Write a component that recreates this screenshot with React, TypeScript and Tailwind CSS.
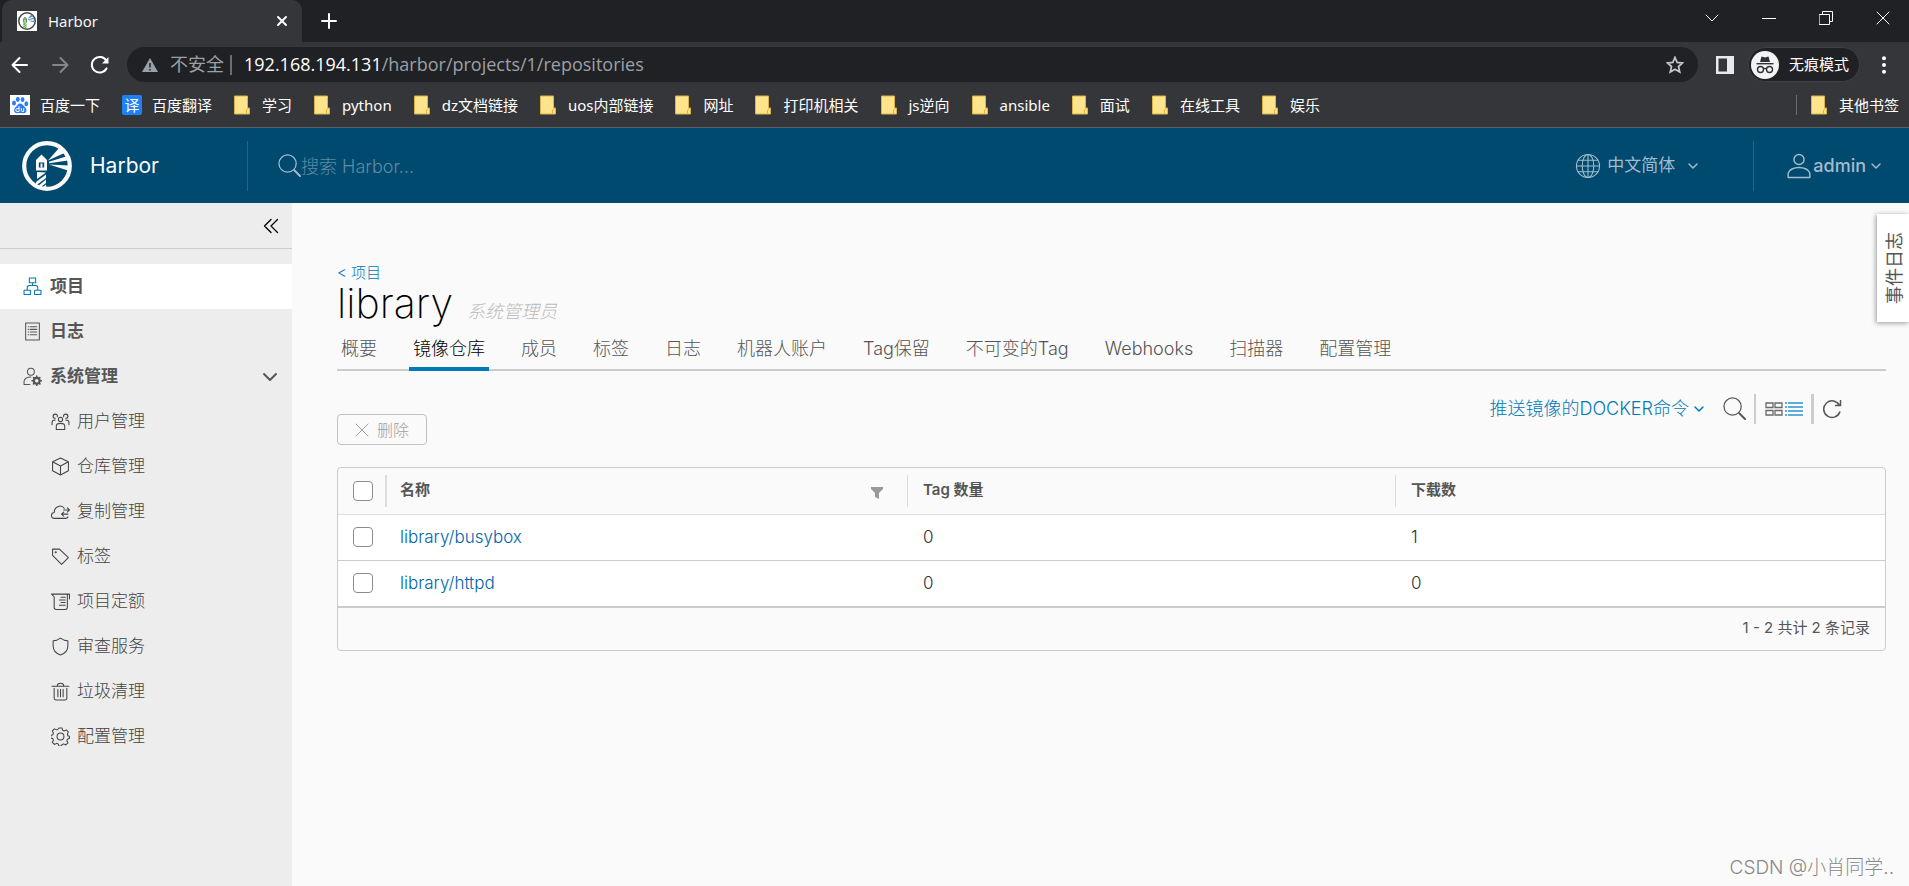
import type { ReactNode } from 'react'

function Icon({ className, box = 36, width = 2, children }: { className: string; box?: number; width?: number; children: ReactNode }) {
  return (
    <svg
      className={`shrink-0 ${className}`}
      viewBox={`0 0 ${box} ${box}`}
      fill="none"
      stroke="currentColor"
      strokeWidth={width}
      strokeLinecap="round"
      strokeLinejoin="round"
      aria-hidden="true"
    >
      {children}
    </svg>
  )
}

const ChevronDown = ({ className }: { className: string }) => (
  <Icon className={className} box={12} width={1.5}>
    <path d="M2 4l4 4 4-4" />
  </Icon>
)

const SearchIcon = ({ className }: { className: string }) => (
  <Icon className={className} box={24} width={1.3}>
    <circle cx="10" cy="10" r="9" />
    <path d="M17 17l6 6" strokeWidth="2" />
  </Icon>
)

const HarborMark = ({ className, beam = 'currentColor', tower = 'currentColor' }: { className: string; beam?: string; tower?: string }) => (
  <svg className={`shrink-0 ${className}`} viewBox="0 0 50 50" aria-hidden="true">
    <circle cx="25" cy="25" r="22.8" fill="none" stroke="currentColor" strokeWidth="4.2" />
    <g fill={beam}>
      <path d="M26 19.500L37 7L42.500 12Z" />
      <path d="M27 20.800L44 15.500L46 19.500L27 22.300Z" />
      <path d="M27 23.500L47 24.500L46 29.500Z" />
    </g>
    <g fill={tower}>
      <path d="M19.500 13.500L25 19H14z" />
      <path d="M14 19h11v10.500h-11zM16.800 21.500v5h5.400v-5z" fillRule="evenodd" />
      <path d="M18.500 22.500h2v4h-2z" />
      <path d="M15 31l9 0.500-9 6.500z" />
      <path d="M24 33.500v3.500l-10 7.500v-3.500z" />
      <path d="M24 38.500v3.500l-7 5.500-3-0.800z" />
      <path d="M24 43.500l1 5.500-6-1.200z" />
    </g>
  </svg>
)

const FolderIcon = () => (
  <svg className="h-5 w-4 shrink-0" viewBox="0 0 16 20" aria-hidden="true">
    <path d="M.5 1h13v12h2v6H.5z" fill="#ffe48c" stroke="#d8b548" />
    <path d="M12.500 18.500v-3.500l2-1.500" fill="none" stroke="#e3b52d" />
  </svg>
)

const BaiduIcon = () => (
  <svg className="size-5 shrink-0" viewBox="0 0 20 20" aria-hidden="true">
    <path fill="#fff" d="M0 0h20v20H0z" />
    <g fill="#2f7cf6">
      <ellipse cx="4" cy="8" rx="2" ry="2.600" />
      <ellipse cx="7.800" cy="4.300" rx="1.900" ry="2.600" />
      <ellipse cx="12.600" cy="4.500" rx="1.900" ry="2.600" />
      <ellipse cx="16.300" cy="8.800" rx="1.900" ry="2.500" />
      <path d="M10 8.500c-2 0-2.600 2-4.500 3.700-2 1.800-2 6 1.500 6 1.500 0 4.500-.2 6 0 3.500.4 4.500-3.500 2.300-5.800-2-2-3-3.900-5.300-3.900z" />
    </g>
    <path d="M9 11v5.500H7.300a1.400 1.400 0 010-3H9M11.300 13.200v2c0 1 .5 1.300 1.200 1.300h1.200v-3.300" fill="none" stroke="#fff" strokeWidth="1" />
  </svg>
)

const navTop = 'flex h-[45px] w-full items-center gap-2 pl-[23px] pr-3.5 text-left text-[17px] font-bold text-[#565656]'

const subItems: { label: string; icon: ReactNode }[] = [
  {
    label: '用户管理',
    icon: (
      <>
        <circle cx="18" cy="14" r="4" />
        <path d="M10 33v-6c0-4 4-5.500 8-5.500s8 1.500 8 5.500v6z" />
        <path d="M12 9c1-4-2-5-4-5s-4 2-4 4 2 4 4 4M24 9c-1-4 2-5 4-5s4 2 4 4-2 4-4 4M8 15c-4 0-6 2-6 5v4M28 15c4 0 6 2 6 5v4" />
      </>
    ),
  },
  { label: '仓库管理', icon: <path d="M18 2l15 7v17l-15 8-15-8V9zM3 9l15 8 15-8M18 17v17" /> },
  {
    label: '复制管理',
    icon: <path d="M27 31H7C-1 31-1 21 6 20 6 8 20 4 25 12M27 31c3 0 5-1 5-3M24 15h11M31 11l4 4-4 4M32 23H20M24 19l-4 4 4 4" />,
  },
  {
    label: '标签',
    icon: (
      <>
        <path d="M3 4v12l17 17 13-13L16 4z" />
        <circle cx="9" cy="10" r="1" />
      </>
    ),
  },
  { label: '项目定额', icon: <path d="M1 4h34v9M1 4l5 5v20c0 3 1 4 4 4h17c3 0 4-1 4-4V4M19 10h8M16 15h11M19 20h8M16 25h11" /> },
  { label: '审查服务', icon: <path d="M18 2c4 3 9 5 14 5v9c0 9-5 15-14 18C9 31 4 25 4 16V7c5 0 10-2 14-5z" /> },
  { label: '垃圾清理', icon: <path d="M2 8h32M12 7c0-6 12-6 12 0M6 12v19c0 2 1 3 3 3h18c2 0 3-1 3-3V12M13 14v14M18 14v14M23 14v14" /> },
  {
    label: '配置管理',
    icon: (
      <>
        <circle cx="18" cy="18" r="6.500" />
        <path d="M15 2h6l1 4 3 1.500 4-2 4 4-2 4 1 3 3 1v4l-4 1.500-1 3 2 4-4 4-4-2-3 1-1 3h-5l-1.500-4-3-1-4 2-4-4 2-4-1-3-4-1v-5l4-1.500 1-3-2-4 4-4 4 2 3-1.500z" />
      </>
    ),
  },
]

const bookmarks = ['学习', 'python', 'dz文档链接', 'uos内部链接', '网址', '打印机相关', 'js逆向', 'ansible', '面试', '在线工具', '娱乐']
const tabs = ['概要', '镜像仓库', '成员', '标签', '日志', '机器人账户', 'Tag保留', '不可变的Tag', 'Webhooks', '扫描器', '配置管理']
const activeTab = '镜像仓库'
const repositories = [
  { name: 'library/busybox', tags: 0, pulls: 1 },
  { name: 'library/httpd', tags: 0, pulls: 0 },
]

function BrowserChrome() {
  return (
    <div className="bg-[#35363a] font-['Open_Sans','Noto_Sans_CJK_SC',sans-serif] text-white">
      <div className="flex h-[42px] items-stretch bg-[#202124] pl-0.5">
        <div className="flex w-[300px] items-center gap-[11px] rounded-t-[10px] bg-[#35363a] pl-[15px] pr-3.5">
          <span className="flex size-5 items-center justify-center bg-white text-[#444]">
            <HarborMark className="size-[18px]" beam="#5b93c9" tower="#5a9b3c" />
          </span>
          <span className="flex-1 text-[15px]">Harbor</span>
          <button type="button" aria-label="关闭标签页">
            <Icon className="size-3" box={12} width={2}>
              <path d="M2 2l8 8M10 2l-8 8" />
            </Icon>
          </button>
        </div>
        <button type="button" aria-label="新标签页" className="ml-[19px]">
          <Icon className="size-4" box={16} width={2}>
            <path d="M8 1v14M1 8h14" />
          </Icon>
        </button>
        <div className="ml-auto flex items-center gap-[43px] pb-1.5 pr-[19px]">
          <button type="button" aria-label="搜索标签页">
            <Icon className="size-3.5" box={14} width={1}>
              <path d="M1 4l6 6 6-6" />
            </Icon>
          </button>
          <button type="button" aria-label="最小化">
            <Icon className="size-3.5" box={14} width={1}>
              <path d="M0 7.500h14" />
            </Icon>
          </button>
          <button type="button" aria-label="还原">
            <Icon className="size-3.5" box={14} width={1}>
              <path d="M.5 3.500h10v10H.5zM3.500 3V.5h10v10H11" />
            </Icon>
          </button>
          <button type="button" aria-label="关闭">
            <Icon className="size-3.5" box={14} width={1}>
              <path d="M1 1l12 12M13 1L1 13" />
            </Icon>
          </button>
        </div>
      </div>

      <div className="flex h-[45px] items-center pl-2.5 pr-4 pt-[5px] pb-[5px]">
        <button type="button" aria-label="后退">
          <Icon className="size-5" box={20} width={2}>
            <path d="M17 10H2.500M9.500 3l-7 7 7 7" />
          </Icon>
        </button>
        <button type="button" aria-label="前进" className="ml-5 text-[#85868a]">
          <Icon className="size-5" box={20} width={2}>
            <path d="M3 10h14.500M10.500 3l7 7-7 7" />
          </Icon>
        </button>
        <button type="button" aria-label="刷新" className="ml-5">
          <Icon className="size-5" box={20} width={2}>
            <path d="M16.500 13.500A7.800 7.800 0 1116.500 6" />
            <path d="M18.500 2v6.500H12z" fill="currentColor" stroke="none" />
          </Icon>
        </button>
        <div className="ml-[17px] flex h-[35px] flex-1 items-center rounded-full bg-[#202124] pl-[15px] pr-3.5">
          <svg className="size-4 shrink-0" viewBox="0 0 16 16" aria-hidden="true">
            <path d="M8 1l8 14H0z" fill="#9aa0a6" />
            <path d="M8 6v4.500M8 12v1.500" stroke="#202124" strokeWidth="1.500" />
          </svg>
          <span className="ml-3 text-[18px] text-[#9aa0a6]">不安全</span>
          <span className="ml-1.5 h-5 w-0.5 bg-[#6b6d70]" />
          <div className="relative ml-3 flex-1 text-[18px] text-[#9aa0a6]">
            <span className="text-white">192.168.194.131</span>/harbor/projects/1/repositories
            <input aria-label="地址" className="absolute inset-0 w-full bg-transparent outline-none" />
          </div>
          <button type="button" aria-label="为此页添加书签" className="text-[#c4c7ca]">
            <Icon className="size-[18px]" box={18} width={1.8}>
              <path d="M9 1.500l2.200 5 5.300.5-4 3.600 1.200 5.400L9 13.200 4.300 16l1.200-5.400-4-3.600 5.300-.5z" strokeLinejoin="miter" />
            </Icon>
          </button>
        </div>
        <button type="button" aria-label="侧边栏" className="ml-[18px]">
          <svg className="size-[18px]" viewBox="0 0 18 18" aria-hidden="true">
            <path d="M0 0h18v18H0zM2.500 2.500v13H11v-13z" fill="#e8eaed" fillRule="evenodd" />
          </svg>
        </button>
        <button
          type="button"
          className="ml-3.5 flex h-[35px] items-center gap-2.5 rounded-full border border-[#3f4044] bg-[#202124] pl-0.5 pr-2.5 text-[15px]"
        >
          <svg className="size-7" viewBox="0 0 28 28" aria-hidden="true">
            <circle cx="14" cy="14" r="14" fill="#f1f3f4" />
            <path d="M10.500 5.500l3.500 1 3.500-1 1.500 5.500H9z" fill="#303134" />
            <path d="M5.500 12.700h17" stroke="#303134" strokeWidth="1.400" />
            <g fill="none" stroke="#303134" strokeWidth="1.400">
              <circle cx="9.500" cy="18.500" r="3" />
              <circle cx="18.500" cy="18.500" r="3" />
              <path d="M12.500 18c1-.8 2-.8 3 0" />
            </g>
          </svg>
          无痕模式
        </button>
        <button type="button" aria-label="菜单" className="ml-[15px]">
          <svg className="size-[18px]" viewBox="0 0 18 18" fill="currentColor" aria-hidden="true">
            <circle cx="9" cy="2.200" r="2" />
            <circle cx="9" cy="9" r="2" />
            <circle cx="9" cy="15.800" r="2" />
          </svg>
        </button>
      </div>

      <nav
        aria-label="书签栏"
        className="flex h-[41px] items-center gap-[22px] border-b border-[#5f6063] pb-1 pl-2.5 pr-2.5 font-['Noto_Sans','Noto_Sans_CJK_SC',sans-serif] text-[15px]"
      >
        <a href="#" className="flex items-center gap-2.5">
          <BaiduIcon />
          百度一下
        </a>
        <a href="#" className="flex items-center gap-2.5">
          <span className="flex size-5 items-center justify-center rounded-xs bg-[#1c82f5] text-[15px] leading-5">译</span>
          百度翻译
        </a>
        {bookmarks.map((label) => (
          <a key={label} href="#" className="flex items-center gap-3">
            <FolderIcon />
            {label}
          </a>
        ))}
        <a href="#" className="ml-auto flex items-center gap-3">
          <span className="mr-0.5 h-5 w-px bg-[#6b6d70]" />
          <FolderIcon />
          其他书签
        </a>
      </nav>
    </div>
  )
}

function Header() {
  return (
    <header className="flex h-[75px] items-center bg-[#004a70] text-[#a3bccb]">
      <a href="#" className="flex w-[247px] items-center gap-[18px] pl-[22px] text-[21px] text-[#fafafa]">
        <HarborMark className="size-[50px]" />
        Harbor
      </a>
      <div className="flex h-[50px] flex-1 items-center border-l border-[#25658a] pl-[30px]">
        <SearchIcon className="size-[23px]" />
        <input
          type="search"
          aria-label="搜索 Harbor"
          placeholder="搜索 Harbor..."
          className="w-60 bg-transparent pt-0.5 text-[18px] font-light outline-none placeholder:text-[#5f8aa3]"
        />
      </div>
      <button type="button" className="flex h-[50px] items-center pr-[54px] text-[17px]">
        <Icon className="mr-1.5 size-[26px]" width={1.5}>
          <circle cx="18" cy="18" r="16" />
          <ellipse cx="18" cy="18" rx="8" ry="16" />
          <path d="M18 2v32M2 18h32M5 10h26M5 26h26" />
        </Icon>
        中文简体
        <ChevronDown className="ml-3 size-3" />
      </button>
      <button type="button" className="flex h-[50px] items-center border-l border-[#25658a] pl-8 pr-[27px] text-[18px] font-medium">
        <Icon className="mr-px size-[26px]" width={2}>
          <circle cx="18" cy="9" r="7" />
          <path d="M3 34v-6c1-5 8-8 15-8s14 3 15 8v6z" />
        </Icon>
        admin
        <ChevronDown className="ml-1 size-3" />
      </button>
    </header>
  )
}

function Sidebar() {
  return (
    <aside className="w-[292px] shrink-0 bg-[#ededed]">
      <div className="mb-[15px] flex h-[46px] items-center justify-end border-b border-[#ccc] pr-[13px]">
        <button type="button" aria-label="收起侧栏" className="text-black">
          <Icon className="size-4" box={16} width={1.3}>
            <path d="M8 1.500L1.500 8 8 14.500M14.500 1.500L8 8l6.500 6.500" />
          </Icon>
        </button>
      </div>
      <nav aria-label="主导航">
        <a href="#" className={`${navTop} bg-white`}>
          <Icon className="size-[19px] text-[#0079b8]">
            <path d="M12 2h12v9H12zM2 25h12v8H2zM22 25h12v8H22zM18 11v5M8 25v-5c0-3 1-4 4-4h12c3 0 4 1 4 4v5" />
          </Icon>
          项目
        </a>
        <a href="#" className={navTop}>
          <Icon className="size-[19px]">
            <path d="M5 2h26v32H5zM10 9h1M10 14h1M10 19h1M10 24h1M14 9h12M14 14h12M14 19h12M14 24h12" />
          </Icon>
          日志
        </a>
        <button type="button" className={navTop} aria-expanded="true">
          <Icon className="size-[19px]">
            <circle cx="15" cy="9" r="6.500" />
            <path d="M13 33H2v-6c1-5 6-8 13-8" />
            <circle cx="26" cy="26" r="5.500" strokeWidth="4" />
            <path d="M26 17v3M26 32v3M17 26h3M32 26h3M20 20l2 2M30 30l2 2M20 32l2-2M30 22l2-2" strokeWidth="3" />
          </Icon>
          <span className="flex-1">系统管理</span>
          <Icon className="size-4" box={16} width={2}>
            <path d="M2 5l6 6 6-6" />
          </Icon>
        </button>
        {subItems.map(({ label, icon }) => (
          <a key={label} href="#" className="flex h-[45px] items-center gap-[7px] pl-[51px] text-[17px] font-light text-[#444]">
            <Icon className="size-[19px]">{icon}</Icon>
            {label}
          </a>
        ))}
      </nav>
    </aside>
  )
}

const check = 'block size-5 appearance-none rounded-[4px] border border-[#8c8c8c] bg-white'

function Repositories() {
  return (
    <div className="mt-[43px] overflow-hidden rounded-[4px] border border-[#ccc]">
      <table className="w-full table-fixed text-left text-[#565656]">
        <colgroup>
          <col className="w-[47px]" />
          <col className="w-[522px]" />
          <col className="w-[488px]" />
          <col />
        </colgroup>
        <thead>
          <tr className="h-[46px] border-b border-[#ddd] text-[15px]">
            <th className="pl-[15px]">
              <input type="checkbox" aria-label="全选" className={check} />
            </th>
            <th className="font-semibold">
              <div className="flex h-8 items-center border-l-2 border-[#ddd] pb-0.5 pl-[13px]">
                名称
                <button type="button" aria-label="筛选名称" className="ml-auto mr-6 pt-1.5 text-[#9a9a9a]">
                  <svg className="size-3" viewBox="0 0 12 12" fill="currentColor" aria-hidden="true">
                    <path d="M0 0h12v2L8 6v6l-4-2V6L0 2z" />
                  </svg>
                </button>
              </div>
            </th>
            <th className="font-semibold">
              <div className="flex h-8 items-center border-l border-[#ddd] pb-0.5 pl-[15px]">Tag 数量</div>
            </th>
            <th className="font-semibold">
              <div className="flex h-8 items-center border-l border-[#ddd] pb-0.5 pl-[15px]">下载数</div>
            </th>
          </tr>
        </thead>
        <tbody>
          {repositories.map((repo) => (
            <tr key={repo.name} className="h-[46px] border-b border-[#ccc] bg-white text-[17px] font-light">
              <td className="pl-[15px]">
                <input type="checkbox" aria-label={repo.name} className={check} />
              </td>
              <td className="pl-[15px] pt-0.5">
                <a href="#" className="text-[#0065ab]">
                  {repo.name}
                </a>
              </td>
              <td className="pl-4 pt-0.5 text-[#333]">{repo.tags}</td>
              <td className="pl-4 pt-0.5 text-[#333]">{repo.pulls}</td>
            </tr>
          ))}
        </tbody>
      </table>
      <div className="flex h-[43px] items-center justify-end border-t border-[#ccc] pr-[15px] text-[15px] text-[#565656]">1 - 2 共计 2 条记录</div>
    </div>
  )
}

function Project() {
  return (
    <main className="relative flex-1 bg-[#fafafa] pl-[45px] pr-[23px] pt-[60px]">
      <a href="#" className="block w-fit text-[15px] font-light leading-5 text-[#0079b8]">
        &lt; 项目
      </a>
      <div className="flex items-baseline gap-3.5 leading-10">
        <h1 className="text-[41px] font-extralight text-black">library</h1>
        <em className="text-[18px] font-light text-[#bbb]">系统管理员</em>
      </div>
      <div role="tablist" className="flex h-[39px] gap-7 border-b-2 border-[#ccc] text-[18px] font-light text-[#555]">
        {tabs.map((label) => (
          <button
            key={label}
            type="button"
            role="tab"
            aria-selected={label === activeTab}
            className={label === activeTab ? '-mb-0.5 border-b-4 border-[#0079b8] px-1 pb-0.5 text-black' : 'px-1 pb-1'}
          >
            {label}
          </button>
        ))}
      </div>
      <div className="mt-[22px] flex items-start justify-between">
        <button
          type="button"
          disabled
          className="mt-[21px] -mb-[33px] flex h-[31px] w-[90px] items-center justify-center gap-2 rounded-[4px] border border-[#c1c1c1] text-base font-light text-[#a0a0a0]"
        >
          <Icon className="size-3.5" box={14} width={1}>
            <path d="M1 1l12 12M13 1L1 13" />
          </Icon>
          删除
        </button>
        <div className="mr-11 flex h-[31px] items-center">
          <button type="button" className="flex items-center gap-1 text-[18px] font-light text-[#0079b8]">
            推送镜像的DOCKER命令
            <ChevronDown className="size-3" />
          </button>
          <button type="button" aria-label="搜索" className="ml-[18px] text-[#565656]">
            <SearchIcon className="size-[23px]" />
          </button>
          <span className="ml-2 h-[30px] w-0.5 bg-[#ccc]" />
          <button type="button" aria-label="卡片视图" className="ml-[9px] text-[#6a6a6a]">
            <svg className="h-[14px] w-[18px]" viewBox="0 0 18 14" fill="none" stroke="currentColor" strokeWidth="1.300" aria-hidden="true">
              <path d="M1 1h7v4.500H1zM10 1h7v4.500h-7zM1 8.500h7V13H1zM10 8.500h7V13h-7z" />
            </svg>
          </button>
          <button type="button" aria-label="列表视图" className="ml-0.5 text-[#2b94cb]">
            <svg className="h-[14px] w-[18px]" viewBox="0 0 18 14" fill="none" stroke="currentColor" strokeWidth="1.500" aria-hidden="true">
              <path d="M0 1h2M3 1h15M0 5h2M3 5h15M0 9h2M3 9h15M0 13h2M3 13h15" />
            </svg>
          </button>
          <span className="ml-2 h-[30px] w-[3px] bg-[#ccc]" />
          <button type="button" aria-label="刷新" className="ml-2 text-[#565656]">
            <Icon className="size-5" box={20} width={1.5}>
              <path d="M18 12.500A8.300 8.300 0 1117.500 6.500M18.500 1v5.500H13" strokeLinecap="butt" strokeLinejoin="miter" />
            </Icon>
          </button>
        </div>
      </div>
      <Repositories />
      <button
        type="button"
        className="absolute right-0 top-[11px] flex h-[108px] w-8 items-center justify-center bg-white pl-1 text-[18px] leading-6 text-[#565656] shadow-[-1px_1px_5px_rgba(0,0,0,0.4)]"
      >
        <span className="rotate-180 [text-orientation:sideways] [writing-mode:vertical-rl]">事件日志</span>
      </button>
      <span className="absolute bottom-1 right-[15px] text-[19px] font-light text-[#888] [text-shadow:1px_1px_1px_#fff]">CSDN @小肖同学..</span>
    </main>
  )
}

export default function App() {
  return (
    <div className="flex min-h-screen flex-col font-['Inter','Noto_Sans_CJK_SC',sans-serif]">
      <BrowserChrome />
      <Header />
      <div className="flex flex-1 overflow-hidden">
        <Sidebar />
        <Project />
      </div>
    </div>
  )
}
